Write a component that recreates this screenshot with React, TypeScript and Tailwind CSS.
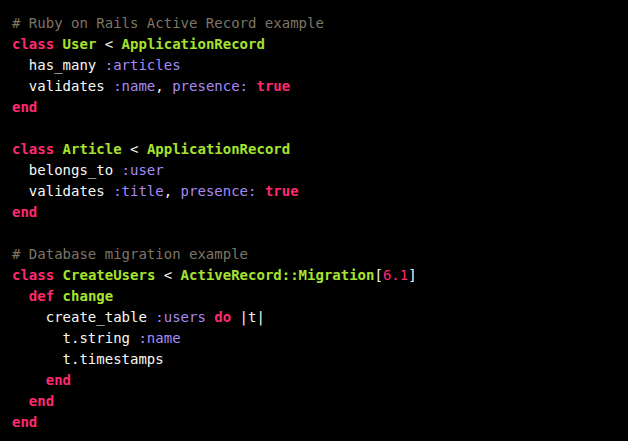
import React from "react";

type Tok = [string, string?];

const K = "text-[#ff2a6e] font-bold";
const C = "text-[#a6e22e] font-bold";
const S = "text-[#a88af5]";
const M = "text-[#7d7565]";
const N = "text-[#ff2a6e]";

const lines: Tok[][] = [
  [["# Ruby on Rails Active Record example", M]],
  [["class", K], [" "], ["User", C], [" < "], ["ApplicationRecord", C]],
  [["  has_many "], [":articles", S]],
  [["  validates "], [":name", S], [", "], ["presence:", S], [" "], ["true", K]],
  [["end", K]],
  [],
  [["class", K], [" "], ["Article", C], [" < "], ["ApplicationRecord", C]],
  [["  belongs_to "], [":user", S]],
  [["  validates "], [":title", S], [", "], ["presence:", S], [" "], ["true", K]],
  [["end", K]],
  [],
  [["# Database migration example", M]],
  [["class", K], [" "], ["CreateUsers", C], [" < "], ["ActiveRecord::Migration", C], ["["], ["6.1", N], ["]"]],
  [["  "], ["def", K], [" "], ["change", C]],
  [["    create_table "], [":users", S], [" "], ["do", K], [" |t|"]],
  [["      t.string "], [":name", S]],
  [["      t.timestamps"]],
  [["    "], ["end", K]],
  [["  "], ["end", K]],
  [["end", K]],
];

export default function App() {
  return (
    <div className="w-[628px] h-[441px] bg-black overflow-hidden">
      <pre
        className="m-0 px-3 pt-[13px] text-[14px] leading-[21px] text-[#f8f8f2] whitespace-pre"
        style={{ fontFamily: '"DejaVu Sans Mono", "Liberation Mono", monospace' }}
      >
        {lines.map((l, i) => (
          <div key={i} className="h-[21px]">
            {l.map(([t, c], j) => (
              <span key={j} className={c}>
                {t}
              </span>
            ))}
          </div>
        ))}
      </pre>
    </div>
  );
}
